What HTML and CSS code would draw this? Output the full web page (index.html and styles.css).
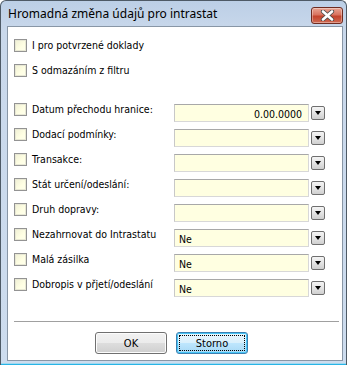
FILE: index.html
```html
<!DOCTYPE html>
<html lang="cs">
<head>
    <meta charset="UTF-8">
    <title>Hromadná změna údajů pro intrastat</title>
    <link rel="stylesheet" href="styles.css">
</head>
<body>
    <div class="window">
        <div class="titlebar">
            <span class="title">Hromadná změna údajů pro intrastat</span>
            <button class="close-btn" type="button">
                <svg width="15" height="11" viewBox="0 0 15 11">
                    <path d="M3 1.5 L12 9.5 M12 1.5 L3 9.5" stroke="#4a4a4a" stroke-width="4.2" stroke-linecap="round"/>
                    <path d="M3 1.5 L12 9.5 M12 1.5 L3 9.5" stroke="#ffffff" stroke-width="2.6" stroke-linecap="round"/>
                </svg>
            </button>
        </div>

        <div class="client">
            <div class="options">
                <div class="check-row"><span class="checkbox"></span><span class="check-label">I pro potvrzené doklady</span></div>
                <div class="check-row"><span class="checkbox"></span><span class="check-label">S odmazáním z filtru</span></div>
            </div>

            <div class="fields">
                <div class="field-row">
                    <span class="checkbox"></span>
                    <span class="field-label">Datum přechodu hranice:</span>
                    <div class="combo">
                        <span class="combo-box align-right">0.00.0000</span>
                        <span class="drop-btn"></span>
                    </div>
                </div>
                <div class="field-row">
                    <span class="checkbox"></span>
                    <span class="field-label">Dodací podmínky:</span>
                    <div class="combo">
                        <span class="combo-box"></span>
                        <span class="drop-btn"></span>
                    </div>
                </div>
                <div class="field-row">
                    <span class="checkbox"></span>
                    <span class="field-label">Transakce:</span>
                    <div class="combo">
                        <span class="combo-box"></span>
                        <span class="drop-btn"></span>
                    </div>
                </div>
                <div class="field-row">
                    <span class="checkbox"></span>
                    <span class="field-label">Stát určení/odeslání:</span>
                    <div class="combo">
                        <span class="combo-box"></span>
                        <span class="drop-btn"></span>
                    </div>
                </div>
                <div class="field-row">
                    <span class="checkbox"></span>
                    <span class="field-label">Druh dopravy:</span>
                    <div class="combo">
                        <span class="combo-box"></span>
                        <span class="drop-btn"></span>
                    </div>
                </div>
                <div class="field-row">
                    <span class="checkbox"></span>
                    <span class="field-label">Nezahrnovat do Intrastatu</span>
                    <div class="combo">
                        <span class="combo-box">Ne</span>
                        <span class="drop-btn"></span>
                    </div>
                </div>
                <div class="field-row">
                    <span class="checkbox"></span>
                    <span class="field-label">Malá zásilka</span>
                    <div class="combo">
                        <span class="combo-box">Ne</span>
                        <span class="drop-btn"></span>
                    </div>
                </div>
                <div class="field-row">
                    <span class="checkbox"></span>
                    <span class="field-label">Dobropis v přjetí/odeslání</span>
                    <div class="combo">
                        <span class="combo-box">Ne</span>
                        <span class="drop-btn"></span>
                    </div>
                </div>
            </div>

            <div class="separator"></div>

            <div class="buttons">
                <button class="btn" type="button">OK</button>
                <button class="btn btn-default" type="button"><span class="focus-ring">Storno</span></button>
            </div>
        </div>
    </div>
</body>
</html>
```

FILE: styles.css
```css
* {
    margin: 0;
    padding: 0;
    box-sizing: border-box;
}

body {
    font-family: 'DejaVu Sans Condensed', 'DejaVu Sans', sans-serif;
    font-stretch: condensed;
    font-size: 10.5px;
    color: #000;
    background: #ffffff;
}

.window {
    width: 347px;
    height: 365px;
    background: linear-gradient(180deg, #bccfe6 0%, #c9d8eb 30px, #cddcee 100%);
    border: 1px solid #4e5a66;
    border-bottom: none;
    border-radius: 6px 6px 0 0;
    padding: 0 4px 0 6px;
    display: flex;
    flex-direction: column;
    box-shadow: inset 0 -1px 0 #28b4e6, inset 0 -2px 0 #9fd8f0;
}

.titlebar {
    height: 25px;
    display: flex;
    align-items: center;
    justify-content: space-between;
    padding: 0 0 0 1px;
}

.title {
    font-family: 'Noto Sans', 'Open Sans', sans-serif;
    font-stretch: normal;
    font-size: 12px;
    line-height: 16px;
    color: #000;
    padding-top: 1px;
}

.close-btn {
    width: 32px;
    height: 17px;
    margin-top: 4px;
    margin-right: -1px;
    border: 1px solid #6e2b20;
    border-radius: 3px;
    background: linear-gradient(180deg, #e8a594 0%, #d8735f 45%, #c4432c 55%, #cf6a52 100%);
    box-shadow: inset 0 0 0 1px rgba(255, 255, 255, 0.35);
    display: flex;
    align-items: center;
    justify-content: center;
}

.client {
    width: 336px;
    height: 335px;
    background: #ffffff;
    border: 1px solid #8896a6;
    display: flex;
    flex-direction: column;
    padding: 0 0 0 6px;
}

.options {
    display: flex;
    flex-direction: column;
    gap: 12px;
    padding-top: 12px;
}

.check-row {
    display: flex;
    align-items: center;
    gap: 5px;
    height: 13px;
}

.checkbox {
    width: 13px;
    height: 13px;
    flex: none;
    border: 1px solid #939393;
    background: linear-gradient(135deg, #f0f0d6 0%, #ffffe4 60%, #ffffee 100%);
    box-shadow: inset 0 0 0 1px #e8e8d4;
}

.check-label,
.field-label {
    line-height: 13px;
    white-space: nowrap;
}

.fields {
    display: flex;
    flex-direction: column;
    padding-top: 26px;
}

.field-row {
    display: grid;
    grid-template-columns: 13px 137px 151px;
    column-gap: 5px;
    height: 25px;
    align-items: start;
}

.field-label {
    display: block;
}

.combo {
    display: flex;
    align-items: center;
    gap: 1px;
    margin-top: 1px;
}

.combo-box {
    width: 136px;
    height: 18px;
    line-height: 16px;
    padding: 1px 4px 0;
    background: #ffffe1;
    border: 1px solid #d8d8d8;
    border-top-color: #a8a8a8;
    border-left-color: #c8c8c8;
}

.align-right {
    text-align: right;
    padding-right: 6px;
}

.drop-btn {
    position: relative;
    width: 14px;
    height: 14px;
    margin-left: 1px;
    border: 1px solid #6f6f6f;
    border-radius: 2px;
    background: linear-gradient(180deg, #f4f4f4 0%, #e4e4e4 50%, #cfcfcf 100%);
}

.drop-btn::after {
    content: '';
    position: absolute;
    left: 3px;
    top: 4px;
    border-left: 3.5px solid transparent;
    border-right: 3.5px solid transparent;
    border-top: 4px solid #000;
}

.separator {
    margin: 18px 3px 0 0;
    height: 2px;
    border-top: 1px solid #a0a0a0;
    border-bottom: 1px solid #ffffff;
}

.buttons {
    display: flex;
    justify-content: center;
    gap: 9px;
    margin-top: 9px;
    padding-right: 13px;
}

.btn {
    width: 72px;
    height: 22px;
    font-family: 'DejaVu Sans Condensed', 'DejaVu Sans', sans-serif;
    font-stretch: condensed;
    font-size: 11px;
    color: #000;
    border: 1px solid #707070;
    border-radius: 3px;
    background: linear-gradient(180deg, #f2f2f2 0%, #ebebeb 50%, #dddddd 51%, #cfcfcf 100%);
    box-shadow: inset 0 0 0 1px #fcfcfc;
}

.btn-default {
    border-color: #3c7fb1;
    background: linear-gradient(180deg, #eaf6fd 0%, #d9f0fc 50%, #bee6fd 51%, #a7d9f5 100%);
    box-shadow: inset 0 0 0 1px #48c6f7;
    padding: 2px;
}

.focus-ring {
    display: flex;
    align-items: center;
    justify-content: center;
    width: 100%;
    height: 100%;
    border: 1px dotted #000;
}
```
